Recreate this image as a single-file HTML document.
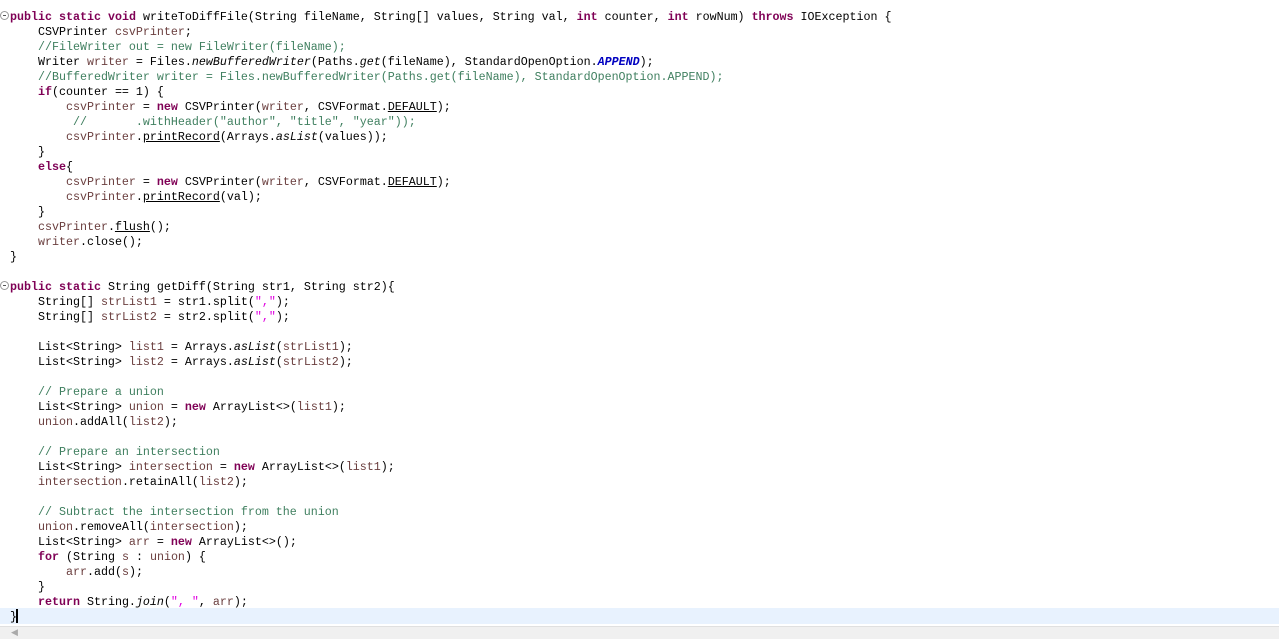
<!DOCTYPE html>
<html><head><style>
html,body{margin:0;padding:0;background:#fff;width:1279px;height:639px;overflow:hidden;position:relative}
pre{position:absolute;left:10px;top:9.5px;margin:0;font-family:"Liberation Mono",monospace;font-size:11.67px;line-height:15px;color:#000;tab-size:4;-moz-tab-size:4}
.k{color:#7f0055;font-weight:bold}
.c{color:#3f7f5f;font-style:normal}
.v{color:#6a3e3e}
.s{color:#e000e0}
.i{font-style:italic}
.cn{color:#0000c0;font-style:italic;font-weight:bold}
.u{text-decoration:underline}
.hl{position:absolute;left:0;top:608px;width:1279px;height:16px;background:#e8f2fe}
.bar{position:absolute;left:0;top:626px;width:1279px;height:13px;background:#f0f0f0;border-top:1px solid #e0e0e0}
.fold{position:absolute;left:0;width:7px;height:7px;border:1px solid #999;border-radius:50%;font-size:0}
.fold::after{content:"";position:absolute;left:2px;top:3px;width:3px;height:1px;background:#555}
.caret{position:absolute;left:16px;top:609px;width:2px;height:14px;background:#000}
</style></head><body>
<div class="hl"></div>
<div class="fold" style="top:11px"></div>
<div class="fold" style="top:281px"></div>
<pre><span class="k">public</span> <span class="k">static</span> <span class="k">void</span> writeToDiffFile(String fileName, String[] values, String val, <span class="k">int</span> counter, <span class="k">int</span> rowNum) <span class="k">throws</span> IOException {
	CSVPrinter <span class="v">csvPrinter</span>;
	<span class="c">//FileWriter out = new FileWriter(fileName);</span>
	Writer <span class="v">writer</span> = Files.<span class="i">newBufferedWriter</span>(Paths.<span class="i">get</span>(fileName), StandardOpenOption.<span class="cn">APPEND</span>);
	<span class="c">//BufferedWriter writer = Files.newBufferedWriter(Paths.get(fileName), StandardOpenOption.APPEND);</span>
	<span class="k">if</span>(counter == 1) {
		<span class="v">csvPrinter</span> = <span class="k">new</span> CSVPrinter(<span class="v">writer</span>, CSVFormat.<span class="u">DEFAULT</span>);
		 <span class="c">//       .withHeader("author", "title", "year"));</span>
		<span class="v">csvPrinter</span>.<span class="u">printRecord</span>(Arrays.<span class="i">asList</span>(values));
	}
	<span class="k">else</span>{
		<span class="v">csvPrinter</span> = <span class="k">new</span> CSVPrinter(<span class="v">writer</span>, CSVFormat.<span class="u">DEFAULT</span>);
		<span class="v">csvPrinter</span>.<span class="u">printRecord</span>(val);
	}
	<span class="v">csvPrinter</span>.<span class="u">flush</span>();
	<span class="v">writer</span>.close();
}

<span class="k">public</span> <span class="k">static</span> String getDiff(String str1, String str2){
	String[] <span class="v">strList1</span> = str1.split(<span class="s">","</span>);
	String[] <span class="v">strList2</span> = str2.split(<span class="s">","</span>);

	List&lt;String&gt; <span class="v">list1</span> = Arrays.<span class="i">asList</span>(<span class="v">strList1</span>);
	List&lt;String&gt; <span class="v">list2</span> = Arrays.<span class="i">asList</span>(<span class="v">strList2</span>);

	<span class="c">// Prepare a union</span>
	List&lt;String&gt; <span class="v">union</span> = <span class="k">new</span> ArrayList&lt;&gt;(<span class="v">list1</span>);
	<span class="v">union</span>.addAll(<span class="v">list2</span>);

	<span class="c">// Prepare an intersection</span>
	List&lt;String&gt; <span class="v">intersection</span> = <span class="k">new</span> ArrayList&lt;&gt;(<span class="v">list1</span>);
	<span class="v">intersection</span>.retainAll(<span class="v">list2</span>);

	<span class="c">// Subtract the intersection from the union</span>
	<span class="v">union</span>.removeAll(<span class="v">intersection</span>);
	List&lt;String&gt; <span class="v">arr</span> = <span class="k">new</span> ArrayList&lt;&gt;();
	<span class="k">for</span> (String <span class="v">s</span> : <span class="v">union</span>) {
		<span class="v">arr</span>.add(<span class="v">s</span>);
	}
	<span class="k">return</span> String.<span class="i">join</span>(<span class="s">", "</span>, <span class="v">arr</span>);
}</pre>
<div class="caret"></div>
<div class="bar"><span style="position:absolute;left:11px;top:0;font-size:9px;color:#aaa;font-family:'Liberation Sans',sans-serif">◀</span></div>
</body></html>
